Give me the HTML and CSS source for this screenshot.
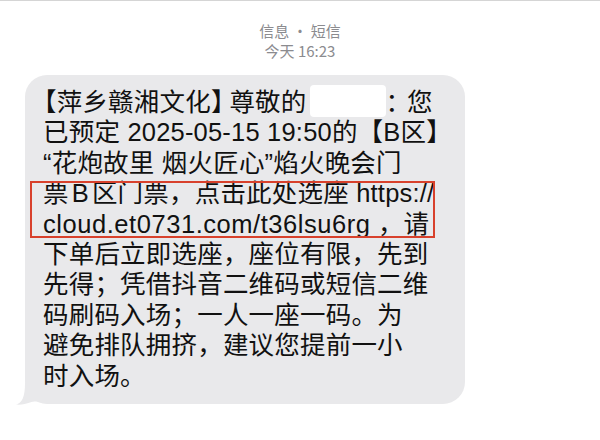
FILE: index.html
```html
<!DOCTYPE html>
<html lang="zh-CN">
<head>
<meta charset="utf-8">
<title>信息</title>
<link rel="stylesheet" href="styles.css">
</head>
<body>
<div class="topline"></div>
<header class="meta">
  <div class="meta-title">信息 • 短信</div>
  <div class="meta-time">今天 16:23</div>
</header>
<main class="thread">
  <div class="bubble">
    <p class="msg">【萍乡赣湘文化<span class="close-trim">】</span>尊敬的<span class="redact"></span><span class="colon">：</span>您<br>已预定 2025-05-15 19:50的【B区】<br>“花炮故里 烟火匠心”焰火晚会门<br>票<span class="spaced">B</span>区门票，点击此处选座 https://<br><span class="url">cloud.et0731.com/t36lsu6rg</span> ，请<br>下单后立即选座，座位有限，先到<br>先得；凭借抖音二维码或短信二维<br>码刷码入场；一人一座一码。为<br>避免排队拥挤，建议您提前一小<br>时入场。</p>
    <div class="highlight"></div>
    <svg class="tail" width="26" height="24" viewBox="0 0 26 24" aria-hidden="true">
      <path d="M0 23.5 C6 22 9 16 9 2 L26 2 L26 21 C20 20 17 20.5 14 21.5 C10 23 5 24 0 23.5 Z" fill="#e9e9eb"/>
    </svg>
  </div>
</main>
</body>
</html>
```

FILE: styles.css
```css
* { box-sizing: border-box; }
html, body {
  margin: 0;
  padding: 0;
  background: #ffffff;
}
body {
  width: 600px;
  height: 440px;
  overflow: hidden;
  font-family: "Liberation Sans", "Noto Sans CJK SC", sans-serif;
  color: #111111;
}
.topline {
  height: 1px;
  background: #d5d5d5;
}
.meta {
  display: flex;
  flex-direction: column;
  align-items: center;
  padding-top: 20px;
  color: #8b8b8f;
  font-size: 15px;
  line-height: 20px;
  font-family: "Noto Sans CJK SC", sans-serif;
}
.thread {
  padding: 14px 0 0 25px;
}
.bubble {
  position: relative;
  width: 440px;
  background: #e9e9eb;
  border-radius: 22px;
  padding: 10px 10px 13px 18px;
}
.msg {
  margin: 0;
  font-size: 25.5px;
  line-height: 30.4px;
  letter-spacing: 0.2px;
  white-space: nowrap;
  text-indent: -12px;
}
.close-trim {
  letter-spacing: -7px;
}
.redact {
  display: inline-block;
  width: 76px;
  height: 32px;
  margin: 0 0 0 3px;
  background: #ffffff;
  border-radius: 4px;
  vertical-align: -6px;
}
.colon {
  letter-spacing: -4px;
}
.spaced {
  margin: 0 3px;
}
.url {
  letter-spacing: 0.55px;
}
.highlight {
  position: absolute;
  left: 5px;
  top: 106px;
  width: 405px;
  height: 57px;
  border: 2px solid #d8412c;
  pointer-events: none;
}
.tail {
  position: absolute;
  left: -9px;
  bottom: -1px;
  display: block;
}
```
